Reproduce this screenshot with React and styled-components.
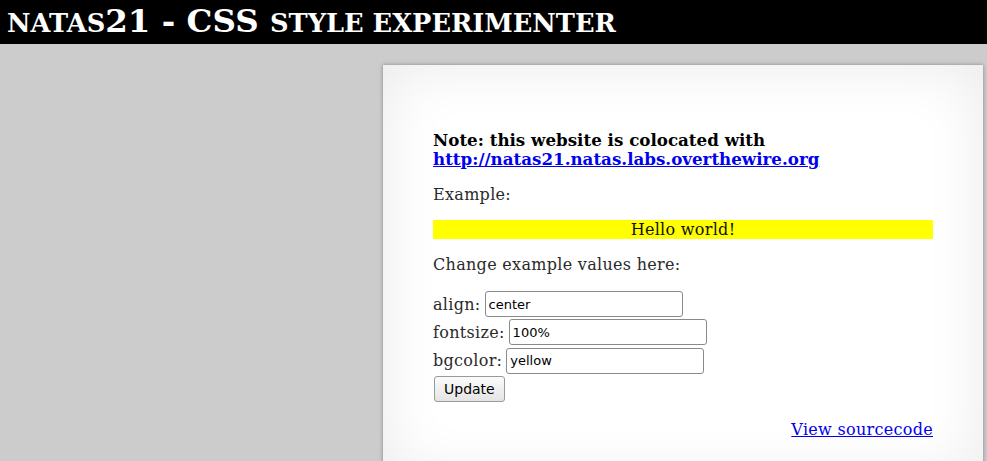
import React from "react";
import styled, { createGlobalStyle } from "styled-components";

const Global = createGlobalStyle`
  html, body { margin: 0; padding: 0; background: #cccccc; }
  body { font-family: "DejaVu Serif", serif; }
`;

const Page = styled.div`
  min-height: 100vh;
  background: #cccccc;
  overflow: hidden;
`;

const Header = styled.h1`
  margin: 0;
  height: 44px;
  box-sizing: border-box;
  background: #000;
  color: #fff;
  font-family: "DejaVu Serif", serif;
  font-weight: bold;
  font-size: 32.5px;
  line-height: 42px;
  padding-left: 7px;
  white-space: nowrap;
`;

const SmallCaps = styled.span`
  font-size: 25.7px;
  text-transform: uppercase;
`;

const Card = styled.div`
  width: 500px;
  margin: 21px 0 0 383px;
  padding: 66px 50px 40px;
  background: #fff;
  box-shadow: 0 0 4px rgba(0, 0, 0, 0.35), inset 0 0 60px rgba(0, 0, 0, 0.09);
  font-family: "DejaVu Serif", serif;
  font-size: 16px;
  letter-spacing: 0.3px;
  color: #2a2a2a;
`;

const Note = styled.div`
  font-size: 16.7px;
  font-weight: bold;
  letter-spacing: 0;
  line-height: 19px;
  color: #000;
`;

const Link = styled.a`
  color: #0000ee;
  text-decoration: underline;
`;

const Para = styled.p`
  margin: 16px 0;
  line-height: 19px;
`;

const Example = styled.div`
  background: yellow;
  color: #111;
  text-align: center;
  height: 19px;
  line-height: 19px;
  margin: 16px 0 15px;
`;

const Form = styled.form`
  display: flex;
  flex-direction: column;
  align-items: flex-start;
  gap: 2.3px;
  margin-top: 17px;
`;

const Row = styled.label`
  display: flex;
  align-items: center;
  gap: 4px;
  height: 26px;
`;

const Input = styled.input`
  box-sizing: border-box;
  width: 198px;
  height: 26px;
  font-family: "DejaVu Sans", sans-serif;
  font-size: 13px;
  letter-spacing: 0;
  padding: 1px 3px;
  border: 1px solid #8a8a8a;
  border-radius: 3px;
  background: #fff;
  color: #000;
`;

const Button = styled.button`
  margin-left: 1px;
  height: 26px;
  padding: 0 9px;
  font-family: "DejaVu Sans", sans-serif;
  font-size: 14px;
  border: 1px solid #9a9a9a;
  border-radius: 3px;
  background: linear-gradient(#fbfbfb, #e4e4e4);
  color: #000;
`;

const Footer = styled.div`
  text-align: right;
  margin-top: 18px;
  line-height: 19px;
`;

export default function App() {
  return (
    <Page>
      <Global />
      <Header>
        <SmallCaps>natas</SmallCaps>21 - CSS <SmallCaps>style experimenter</SmallCaps>
      </Header>
      <Card>
        <Note>
          Note: this website is colocated with{" "}
          <Link href="#">http://natas21.natas.labs.overthewire.org</Link>
        </Note>
        <Para>Example:</Para>
        <Example>Hello world!</Example>
        <Para>Change example values here:</Para>
        <Form onSubmit={(e) => e.preventDefault()}>
          <Row>
            align: <Input defaultValue="center" />
          </Row>
          <Row>
            fontsize: <Input defaultValue="100%" />
          </Row>
          <Row>
            bgcolor: <Input defaultValue="yellow" />
          </Row>
          <Button type="submit">Update</Button>
        </Form>
        <Footer>
          <Link href="#">View sourcecode</Link>
        </Footer>
      </Card>
    </Page>
  );
}
